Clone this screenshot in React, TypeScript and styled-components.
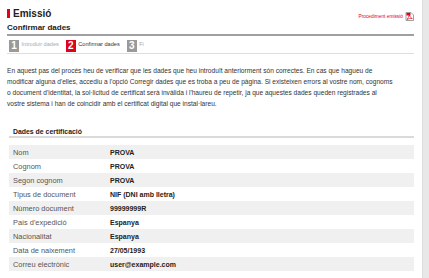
import React from "react";
import styled, { createGlobalStyle } from "styled-components";

const GlobalStyle = createGlobalStyle`
  html, body {
    margin: 0;
    padding: 0;
    background: #fff;
  }
  body {
    font-family: "Liberation Sans", Arial, sans-serif;
  }
`;

const Page = styled.div`
  display: flex;
  width: 429px;
  height: 278px;
  overflow: hidden;
`;

const Main = styled.main`
  flex: 1;
  padding: 7px 8px 0 7px;
  min-width: 0;
`;

const Gutter = styled.div`
  width: 6px;
  background: #e8e8e8;
  border-left: 1px solid #dcdcdc;
`;

const Header = styled.div`
  display: flex;
  justify-content: space-between;
  align-items: center;
  height: 13px;
`;

const Title = styled.h1`
  display: flex;
  align-items: center;
  margin: 0;
  font-size: 10px;
  line-height: 13px;
  font-weight: bold;
  color: #222;
  &::before {
    content: "";
    width: 3px;
    height: 9px;
    margin-right: 3px;
    background: #e2001a;
  }
`;

const DocLink = styled.a`
  display: flex;
  align-items: center;
  gap: 2px;
  margin-top: 5px;
  font-size: 4.8px;
  color: #e2001a;
  text-decoration: none;
`;

const Subtitle = styled.h2`
  margin: 3px 0 0;
  padding-bottom: 1px;
  font-size: 8px;
  line-height: 10px;
  font-weight: bold;
  color: #222;
  border-bottom: 2px solid #a0a0a0;
`;

const Steps = styled.ol`
  display: flex;
  gap: 7px;
  margin: 0;
  padding: 4px 2px 0;
  height: 13px;
  list-style: none;
  border-bottom: 1px solid #dedede;
`;

const Step = styled.li<{ $active?: boolean }>`
  display: flex;
  align-items: flex-start;
  gap: 2.5px;
  font-size: 5.6px;
  line-height: 8px;
  color: ${(p) => (p.$active ? "#333" : "#aaa")};
`;

const StepNumber = styled.span<{ $active?: boolean }>`
  display: flex;
  align-items: center;
  justify-content: center;
  width: 10px;
  height: 12px;
  font-size: 10px;
  font-weight: bold;
  color: #fff;
  background: ${(p) => (p.$active ? "#e2001a" : "#9a9a9a")};
`;

const Intro = styled.p`
  margin: 11px 0 0;
  font-size: 6.6px;
  line-height: 11px;
  color: #333;
  white-space: nowrap;
`;

const Section = styled.section`
  margin: 18px 0 0 2px;
`;

const SectionTitle = styled.h3`
  margin: 0;
  padding: 0 0 0 4px;
  font-size: 6.9px;
  line-height: 9px;
  font-weight: bold;
  color: #222;
  border-bottom: 2px solid #dadada;
`;

const Table = styled.div`
  margin-top: 7px;
`;

const Row = styled.div`
  display: grid;
  grid-template-columns: 97px 1fr;
  align-items: center;
  height: 14px;
  padding-left: 4px;
  &:nth-child(odd) {
    background: #f0f0f0;
  }
`;

const Label = styled.span`
  font-size: 7.4px;
  color: #555;
`;

const Value = styled.span`
  font-size: 7px;
  font-weight: bold;
  color: #222;
`;

const PdfIcon = () => (
  <svg width="9" height="9" viewBox="0 0 9 9">
    <path d="M1 0.5h5l2.5 2.5v5.5h-7.5z" fill="#fff" stroke="#888" strokeWidth="0.8" />
    <path d="M1.5 1h4v2.5h-4z" fill="#e2001a" />
    <path d="M2 7.5c1-1.3 2-3 2.3-4.5c0.4 1.6 1.5 2.8 3 3.5c-2-0.2-3.8 0.2-5.3 1z" fill="none" stroke="#e2001a" strokeWidth="0.7" />
  </svg>
);

const steps = [
  { n: 1, label: "Introduir dades" },
  { n: 2, label: "Confirmar dades", active: true },
  { n: 3, label: "Fi" },
];

const data: [string, string][] = [
  ["Nom", "PROVA"],
  ["Cognom", "PROVA"],
  ["Segon cognom", "PROVA"],
  ["Tipus de document", "NIF (DNI amb lletra)"],
  ["Número document", "99999999R"],
  ["País d'expedició", "Espanya"],
  ["Nacionalitat", "Espanya"],
  ["Data de naixement", "27/05/1993"],
  ["Correu electrònic", "user@example.com"],
];

const App: React.FC = () => {
  return (
    <Page>
      <GlobalStyle />
      <Main>
        <Header>
          <Title>Emissió</Title>
          <DocLink href="#">
            Procediment emissió
            <PdfIcon />
          </DocLink>
        </Header>
        <Subtitle>Confirmar dades</Subtitle>
        <Steps>
          {steps.map((s) => (
            <Step key={s.n} $active={s.active}>
              <StepNumber $active={s.active}>{s.n}</StepNumber>
              {s.label}
            </Step>
          ))}
        </Steps>
        <Intro>
          En aquest pas del procés heu de verificar que les dades que heu introduït anteriorment són correctes. En cas que hagueu de
          <br />
          modificar alguna d'elles, accediu a l'opció Corregir dades que es troba a peu de pàgina. Si existeixen errors al vostre nom, cognoms
          <br />
          o document d'identitat, la sol·licitud de certificat serà invàlida i l'haureu de repetir, ja que aquestes dades queden registrades al
          <br />
          vostre sistema i han de coincidir amb el certificat digital que instal·lareu.
        </Intro>
        <Section>
          <SectionTitle>Dades de certificació</SectionTitle>
          <Table>
            {data.map(([label, value]) => (
              <Row key={label}>
                <Label>{label}</Label>
                <Value>{value}</Value>
              </Row>
            ))}
          </Table>
        </Section>
      </Main>
      <Gutter />
    </Page>
  );
};

export default App;
